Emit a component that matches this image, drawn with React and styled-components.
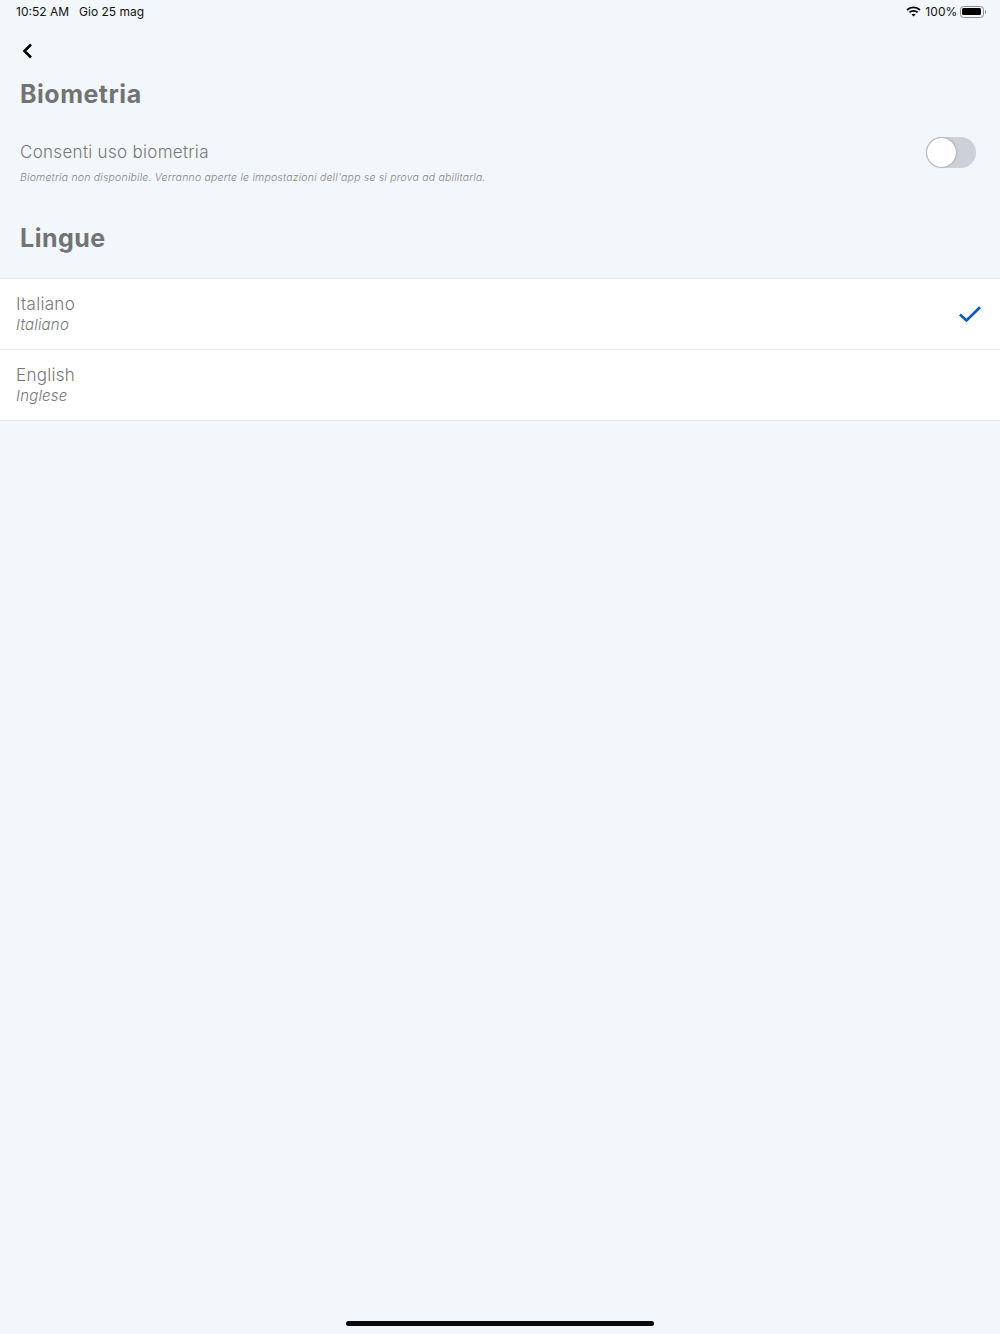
import React, { useState } from 'react';
import styled, { createGlobalStyle } from 'styled-components';

const GlobalStyle = createGlobalStyle`
    html, body {
        margin: 0;
        padding: 0;
        background: #f2f7fb;
    }
`;

const Page = styled.div`
    display: flex;
    flex-direction: column;
    width: 100%;
    height: 1334px;
    overflow: hidden;
    background: #f2f7fb;
    font-family: 'Inter', sans-serif;
`;

const StatusBar = styled.div`
    display: flex;
    justify-content: space-between;
    align-items: center;
    height: 23px;
    padding: 0 14px 0 16px;
    font-size: 12px;
    font-weight: 400;
    color: #111;
`;

const StatusGroup = styled.div`
    display: flex;
    align-items: center;
    gap: ${props => props.$gap || 4}px;
`;

const BatteryText = styled.span`
    margin-right: -2px;
    letter-spacing: 0.1px;
`;

const BackButton = styled.button`
    display: flex;
    align-items: center;
    justify-content: center;
    align-self: flex-start;
    width: 16px;
    height: 16px;
    margin: 20px 0 0 19px;
    padding: 0;
    border: none;
    background: none;
    cursor: pointer;
`;

const SectionTitle = styled.h2`
    margin: ${props => props.$top}px 0 0 20px;
    font-size: 25px;
    line-height: 30px;
    font-weight: 700;
    letter-spacing: 0.5px;
    color: #737373;
`;

const BiometryRow = styled.div`
    display: flex;
    justify-content: space-between;
    align-items: center;
    height: 32px;
    margin-top: 27px;
    padding: 0 24px 0 20px;
`;

const RowLabel = styled.span`
    font-size: 17px;
    font-weight: 300;
    letter-spacing: 0.3px;
    color: #777;
`;

const Hint = styled.p`
    margin: 2px 0 0 20px;
    font-size: 10.5px;
    line-height: 16px;
    font-style: italic;
    font-weight: 300;
    letter-spacing: 0.2px;
    color: #858585;
`;

const Toggle = styled.button`
    display: flex;
    width: 50px;
    height: 31px;
    margin-top: 1px;
    padding: 1px;
    border: none;
    border-radius: 16px;
    background: ${props => (props.$on ? '#0a5cb8' : '#cdd0d6')};
    justify-content: ${props => (props.$on ? 'flex-end' : 'flex-start')};
    cursor: pointer;
`;

const Knob = styled.span`
    width: 29px;
    height: 29px;
    border-radius: 50%;
    background: #fff;
    box-shadow: 0 0 2px rgba(0, 0, 0, 0.45);
`;

const LanguageList = styled.ul`
    margin: 25px 0 0;
    padding: 0;
    list-style: none;
    background: #fff;
    border-top: 1px solid #e6e8ea;
`;

const LanguageRow = styled.li`
    display: flex;
    justify-content: space-between;
    align-items: center;
    height: 70px;
    padding: 0 19px 0 16px;
    border-bottom: 1px solid #e6e8ea;
`;

const LanguageText = styled.div`
    display: flex;
    flex-direction: column;
`;

const LanguageName = styled.span`
    font-size: 17px;
    line-height: 21px;
    font-weight: 300;
    letter-spacing: 0.3px;
    color: #777;
`;

const LanguageLocal = styled.span`
    font-size: 15px;
    line-height: 20px;
    font-style: italic;
    font-weight: 300;
    letter-spacing: 0.2px;
    color: #777;
`;

const HomeIndicator = styled.div`
    align-self: center;
    width: 308px;
    height: 5px;
    margin: auto 0 8px;
    border-radius: 3px;
    background: #0a0a0a;
`;

const BatteryOutline = styled.div`
    display: flex;
    width: 24px;
    height: 12px;
    padding: 1.5px;
    box-sizing: border-box;
    border: 1px solid #8d8d8d;
    border-radius: 3.5px;
`;

const BatteryFill = styled.div`
    flex: 1;
    border-radius: 1.5px;
    background: #000;
`;

const BatteryCap = styled.div`
    width: 1.5px;
    height: 4px;
    margin-left: 1px;
    border-radius: 0 1px 1px 0;
    background: #8d8d8d;
`;

const Battery = styled.div`
    display: flex;
    align-items: center;
`;

function WifiIcon() {
    return (
        <svg width="15" height="11" viewBox="0 0 15 11" fill="none" stroke="#000" strokeWidth="1.8">
            <path d="M1 4 C4.6 0.6 10.4 0.6 14 4" />
            <path d="M3.4 6.4 C5.6 4.4 9.4 4.4 11.6 6.4" />
            <path d="M7.5 10.6 L5.5 8.5 C6.6 7.6 8.4 7.6 9.5 8.5 Z" fill="#000" stroke="none" />
        </svg>
    );
}

function BackIcon() {
    return (
        <svg width="11" height="16" viewBox="0 0 11 16" fill="none" stroke="#000" strokeWidth="2.6">
            <path d="M9 1.5 L2.5 8 L9 14.5" />
        </svg>
    );
}

function CheckIcon() {
    return (
        <svg width="22" height="17" viewBox="0 0 22 17" fill="none" stroke="#0a5cb8" strokeWidth="2.7">
            <path d="M1 8.5 L7.5 14.5 L21 1.2" />
        </svg>
    );
}

const languages = [
    { name: 'Italiano', local: 'Italiano', selected: true },
    { name: 'English', local: 'Inglese', selected: false },
];

export default function App() {
    const [biometry, setBiometry] = useState(false);

    return (
        <Page>
            <GlobalStyle />
            <StatusBar>
                <StatusGroup $gap={10}>
                    <span>10:52 AM</span>
                    <span>Gio 25 mag</span>
                </StatusGroup>
                <StatusGroup>
                    <WifiIcon />
                    <BatteryText>100%</BatteryText>
                    <Battery>
                        <BatteryOutline><BatteryFill /></BatteryOutline>
                        <BatteryCap />
                    </Battery>
                </StatusGroup>
            </StatusBar>

            <BackButton aria-label="Indietro"><BackIcon /></BackButton>
            <SectionTitle $top={20}>Biometria</SectionTitle>

            <BiometryRow>
                <RowLabel>Consenti uso biometria</RowLabel>
                <Toggle $on={biometry} onClick={() => setBiometry(!biometry)} aria-label="Consenti uso biometria">
                    <Knob />
                </Toggle>
            </BiometryRow>
            <Hint>Biometria non disponibile. Verranno aperte le impostazioni dell'app se si prova ad abilitarla.</Hint>

            <SectionTitle $top={37}>Lingue</SectionTitle>

            <LanguageList>
                {languages.map(language => (
                    <LanguageRow key={language.name}>
                        <LanguageText>
                            <LanguageName>{language.name}</LanguageName>
                            <LanguageLocal>{language.local}</LanguageLocal>
                        </LanguageText>
                        {language.selected && <CheckIcon />}
                    </LanguageRow>
                ))}
            </LanguageList>

            <HomeIndicator />
        </Page>
    );
}
